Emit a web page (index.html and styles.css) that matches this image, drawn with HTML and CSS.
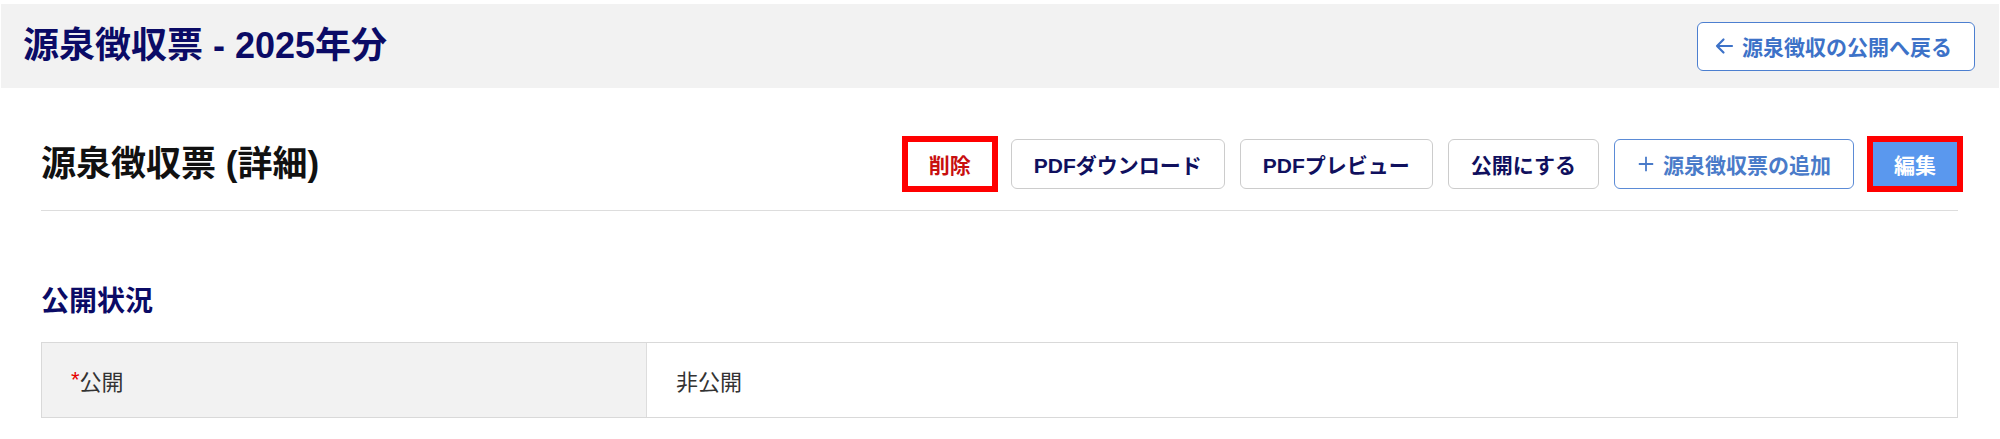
FILE: index.html
```html
<!DOCTYPE html>
<html lang="ja">
<head>
<meta charset="utf-8">
<title>源泉徴収票 - 2025年分</title>
<link rel="stylesheet" href="styles.css">
</head>
<body>
<header class="page-header">
  <h1 class="page-title">源泉徴収票 - 2025年分</h1>
  <a class="btn btn-back" href="#">
    <svg class="icon" viewBox="0 0 20 20" width="20" height="20" aria-hidden="true"><path d="M18 10H3M9.5 3.5L3 10L9.5 16.5" fill="none" stroke="currentColor" stroke-width="2.2" stroke-linecap="round" stroke-linejoin="round"/></svg>
    源泉徴収の公開へ戻る
  </a>
</header>
<main class="content">
  <div class="section-head">
    <h2 class="section-title">源泉徴収票 (詳細)</h2>
    <div class="actions">
      <button class="btn btn-delete highlight">削除</button>
      <button class="btn">PDFダウンロード</button>
      <button class="btn">PDFプレビュー</button>
      <button class="btn">公開にする</button>
      <button class="btn btn-add">
        <svg class="icon" viewBox="0 0 20 20" width="18" height="18" aria-hidden="true"><path d="M10 2V18M2 10H18" fill="none" stroke="currentColor" stroke-width="2"/></svg>
        源泉徴収票の追加
      </button>
      <button class="btn btn-edit highlight">編集</button>
    </div>
  </div>
  <section class="status">
    <h3 class="status-title">公開状況</h3>
    <div class="detail-table">
      <div class="detail-label"><span class="req">*</span>公開</div>
      <div class="detail-value">非公開</div>
    </div>
  </section>
</main>
</body>
</html>
```

FILE: styles.css
```css
* {
  box-sizing: border-box;
}

body {
  margin: 0;
  background: #fff;
  font-family: "Liberation Sans", "Noto Sans CJK JP", sans-serif;
  color: #333;
}

.page-header {
  margin: 4px 1px 0;
  height: 84px;
  background: #f2f2f2;
  display: flex;
  align-items: center;
  justify-content: space-between;
  padding: 0 24px 0 22px;
}

.page-title {
  margin: 0;
  font-size: 36px;
  font-weight: bold;
  color: #0b0b66;
  line-height: 1.2;
}

.btn {
  position: relative;
  display: inline-flex;
  align-items: center;
  justify-content: center;
  gap: 8px;
  height: 50px;
  padding: 0 22px;
  border: 1px solid #cccccc;
  border-radius: 6px;
  background: #fff;
  font-family: "Liberation Sans", "Noto Sans CJK JP", sans-serif;
  font-size: 21px;
  font-weight: bold;
  color: #10105e;
  text-decoration: none;
  white-space: nowrap;
  cursor: pointer;
}

.btn-back {
  height: 49px;
  border-color: #4c7fd0;
  color: #3d72c8;
  padding: 0 22px 0 16px;
}

.icon {
  flex: none;
}

.content {
  padding: 0 42px 0 41px;
}

.section-head {
  display: flex;
  align-items: center;
  justify-content: space-between;
  padding: 51px 0 21px;
  border-bottom: 1px solid #dddddd;
}

.section-title {
  margin: 0;
  font-size: 35px;
  font-weight: bold;
  color: #111;
  line-height: 1.2;
}

.actions {
  display: flex;
  align-items: center;
  gap: 15px;
  margin-right: -3px;
}

.btn-delete {
  width: 92px;
  color: #c80f0f;
}

.btn-add {
  border-color: #5b8bd6;
  color: #4a7bc9;
}

.btn-edit {
  width: 92px;
  background: #5a98ee;
  border-color: #5a98ee;
  color: #fff;
}

.highlight::after {
  content: "";
  position: absolute;
  top: -4px;
  left: -3px;
  right: -3px;
  bottom: -4px;
  border: 6px solid #ff0000;
  pointer-events: none;
}

.status-title {
  margin: 71px 0 20px;
  font-size: 28px;
  line-height: 40px;
  font-weight: bold;
  color: #0b0b66;
}

.detail-table {
  display: grid;
  grid-template-columns: 605px 1fr;
  border: 1px solid #d9d9d9;
}

.detail-label,
.detail-value {
  height: 74px;
  display: flex;
  align-items: center;
  padding-left: 29px;
  font-size: 22px;
  color: #333;
}

.detail-label {
  background: #f2f2f2;
  border-right: 1px solid #dddddd;
}

.req {
  color: #e60000;
}
```
